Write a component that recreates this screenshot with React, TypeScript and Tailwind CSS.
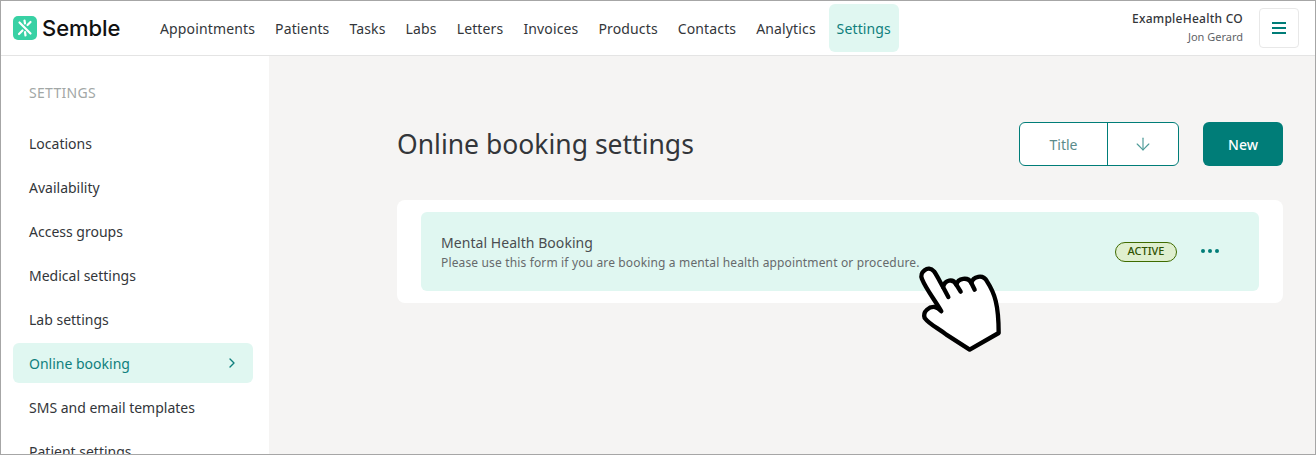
import React from "react";
import { ChevronRight, ArrowDown } from "lucide-react";

const nav = ["Appointments","Patients","Tasks","Labs","Letters","Invoices","Products","Contacts","Analytics"];
const side = ["Locations","Availability","Access groups","Medical settings","Lab settings"];

function Hand() {
  return (
    <svg className="absolute left-[912px] top-[262px]" width="93" height="90" viewBox="100 100 279 270">
      <path d="M127 148 C118 128 145 105 163 125 C172 138 182 158 190 172 C196 150 220 145 230 165 C235 145 265 140 275 160 C280 140 310 132 322 155 C345 190 357 225 357 310 L270 360 L200 315 C175 295 150 285 135 265 C128 245 150 230 165 232 C175 235 180 240 185 245 C165 210 140 180 127 148 Z" fill="white" stroke="black" strokeWidth="13" strokeLinejoin="round" />
      <path d="M190 172 L206 202 M230 165 L243 186 M275 160 L285 180" stroke="black" strokeWidth="13" strokeLinecap="round" fill="none" />
    </svg>
  );
}

export default function App() {
  return (
    <div className="relative h-[455px] w-[1316px] overflow-hidden border border-[#a6a6a6] bg-white text-[#33363a] [font-family:'Noto_Sans',sans-serif]">
      <header className="flex h-[55px] items-center border-b border-[#e4e4e4] pl-3 pr-4">
        <div className="flex w-[147px] items-center gap-[5px]">
          <svg width="24" height="24" viewBox="0 0 24 24">
            <rect width="24" height="24" rx="5" fill="#38d1a4" />
            <path d="M6.5 6.5 L17.5 17.5 M17.5 6 L14.5 9 M6 18 L9.5 14.5 M11.5 4.5 L12 7.5 M12 16 L12.5 19.5" stroke="white" strokeWidth="2.2" strokeLinecap="round" />
          </svg>
          <span className="text-[22px] font-medium leading-none tracking-[-0.05px] text-[#111] [font-family:Inter,sans-serif]">Semble</span>
        </div>
        <nav className="flex items-center gap-5 text-[14px] tracking-[0.14px]">
          {nav.map((n) => <span key={n}>{n}</span>)}
          <span className="-ml-[7px] flex h-12 w-[70px] items-center justify-center rounded-md bg-[#e0f7f1] text-[#0f7f7d]">Settings</span>
        </nav>
        <div className="ml-auto flex items-center gap-4">
          <div className="text-right">
            <div className="text-[12px] font-medium leading-[18px] tracking-[0.25px]">ExampleHealth CO</div>
            <div className="text-[11px] leading-[18px] text-[#5f6368]">Jon Gerard</div>
          </div>
          <div className="flex h-10 w-10 flex-col items-center justify-center gap-[3px] rounded border border-[#e8e8e8]">
            <i className="h-[2px] w-[14px] bg-[#007d78]" /><i className="h-[2px] w-[14px] bg-[#007d78]" /><i className="h-[2px] w-[14px] bg-[#007d78]" />
          </div>
        </div>
      </header>
      <div className="flex h-[398px]">
        <aside className="w-[268px] shrink-0 overflow-hidden pl-3 pr-4">
          <div className="mb-[20px] mt-[26px] px-4 text-[14px] tracking-[0.3px] text-[#a2a7a6]">SETTINGS</div>
          <div className="flex flex-col gap-1 text-[14px]">
            {side.map((s) => <div key={s} className="flex h-10 items-center px-4">{s}</div>)}
            <div className="flex h-10 items-center justify-between rounded-md bg-[#e0f7f1] pl-4 pr-[13px] text-[#0f7f7d]">
              Online booking
              <ChevronRight size={16} />
            </div>
            <div className="flex h-10 items-center px-4">SMS and email templates</div>
            <div className="flex h-10 items-center px-4">Patient settings</div>
          </div>
        </aside>
        <main className="flex-1 bg-[#f5f4f3] pl-[128px] pr-8 pt-[66px]">
          <div className="flex h-11 items-center justify-between">
            <h1 className="pt-[2px] text-[26.5px] font-normal">Online booking settings</h1>
            <div className="flex items-center gap-6">
              <div className="flex h-11 w-40 overflow-hidden rounded-md border border-[#007d78] bg-white text-[14px] text-[#5b8c8b]">
                <span className="flex w-[88px] items-center justify-center border-r border-[#007d78]">Title</span>
                <span className="flex flex-1 items-center justify-center text-[#4f9c99]"><ArrowDown size={20} strokeWidth={1.4} /></span>
              </div>
              <div className="flex h-11 w-20 items-center justify-center rounded-md bg-[#007d78] text-[14px] font-medium text-white">New</div>
            </div>
          </div>
          <div className="mt-[34px] rounded-lg bg-white px-6 py-3">
            <div className="flex h-[79px] items-center justify-between rounded-md bg-[#e0f7f1] pl-[20px] pr-10">
              <div className="pt-px">
                <div className="text-[14px] leading-[20px] tracking-[0.05px] text-[#4a4d50]">Mental Health Booking</div>
                <div className="pt-px text-[12px] leading-[18px] tracking-[0.15px] text-[#666a6c]">Please use this form if you are booking a mental health appointment or procedure.</div>
              </div>
              <div className="flex items-center gap-6">
                <span className="flex h-5 w-[62px] items-center justify-center rounded-full border border-[#3f6b00] bg-[#dfefcf] text-[11px] font-medium text-[#2f5200]">ACTIVE</span>
                <span className="mb-px flex gap-[3px]">
                  <i className="h-1 w-1 rounded-full bg-[#007d78]" /><i className="h-1 w-1 rounded-full bg-[#007d78]" /><i className="h-1 w-1 rounded-full bg-[#007d78]" />
                </span>
              </div>
            </div>
          </div>
        </main>
      </div>
      <Hand />
    </div>
  );
}
